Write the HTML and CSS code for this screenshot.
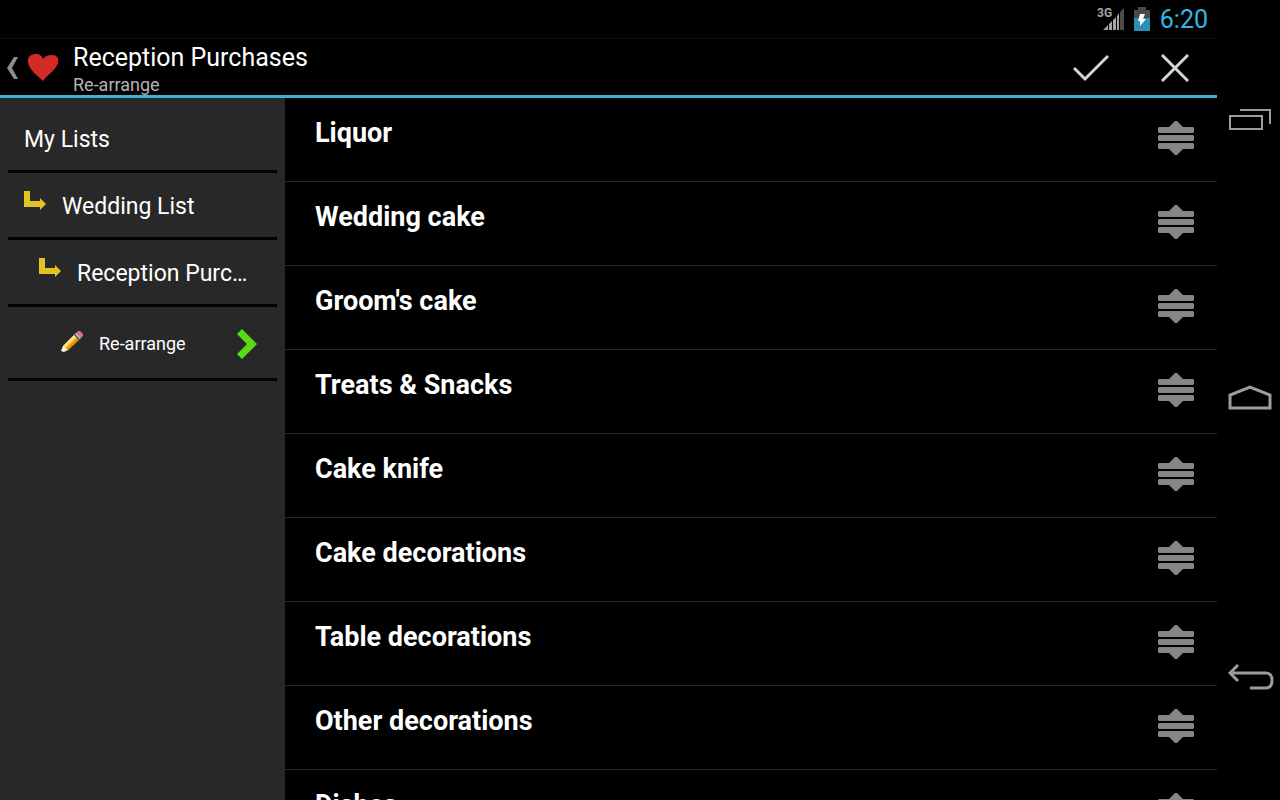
FILE: index.html
```html
<!DOCTYPE html>
<html lang="en">

<head>
    <meta charset="UTF-8">
    <meta name="viewport" content="width=device-width, initial-scale=1.0">
    <title>Reception Purchases - Re-arrange</title>
    <link rel="stylesheet" href="styles.css">
</head>

<body>
    <!-- shared icons -->
    <svg class="sprite" aria-hidden="true">
        <symbol id="handle" viewBox="0 0 36 34">
            <path d="M17 0H19L25 6H35L36 7V11L35 12H1L0 11V7L1 6H11ZM1 14H35L36 15V19L35 20H1L0 19V15ZM1 22H35L36 23V27L35 28H25L19 34H17L11 28H1L0 27V23Z" />
        </symbol>
        <symbol id="sub-arrow" viewBox="0 0 22 19">
            <path d="M0 0H6V10H16V7L22 13L16 19V16H0Z" />
        </symbol>
    </svg>

    <div class="app">
        <header class="status-bar">
            <svg class="signal" width="28" height="26" viewBox="0 0 28 26" aria-hidden="true">
                <text x="0" y="11">3G</text>
                <path fill="#a4a4a4" d="M6 24L11 19V24ZM12 24V18L15 15V24ZM16 24V14L19 11V24ZM20 24V10L22 7V24Z" />
                <path fill="#4c4c4c" d="M23 24V6L27 2V24Z" />
            </svg>
            <svg class="battery" width="16" height="24" viewBox="0 0 16 24" aria-hidden="true">
                <path fill="#4a4a4a" d="M4 0H12V3H16V12H0V3H4Z" />
                <path fill="#2b90b8" d="M0 11H16V24H0Z" />
                <path fill="#fff" d="M6 7H11L9 12H12L6 19V14H4Z" />
            </svg>
            <time>6:20</time>
        </header>

        <header class="action-bar">
            <button class="up" aria-label="Back">
                <svg width="12" height="22" viewBox="0 0 12 22">
                    <path fill="#8c8c8c" d="M8 0H12L6 11L12 22H8L1 11Z" />
                </svg>
                <svg class="heart" width="32" height="28" viewBox="0 0 32 28">
                    <path fill="#d42a27" d="M16 27C11 22 2 16 1 8C0 2 5 0 9 0C13 0 15 2 16 5C18 2 21 1 25 1C30 1 32 4 31 9C29 16 20 21 16 27Z" />
                </svg>
            </button>
            <div class="titles">
                <h1>Reception Purchases</h1>
                <p>Re-arrange</p>
            </div>
            <button class="action" aria-label="Done">
                <svg width="36" height="28" viewBox="0 0 36 28">
                    <path d="M1 14L12 25L35 2" />
                </svg>
            </button>
            <button class="action" aria-label="Cancel">
                <svg width="28" height="28" viewBox="0 0 28 28">
                    <path d="M1 1L27 27M27 1L1 27" />
                </svg>
            </button>
        </header>

        <div class="content">
            <nav class="sidebar">
                <a href="#">My Lists</a>
                <a href="#"><svg class="sub-arrow"><use href="#sub-arrow" /></svg><span>Wedding List</span></a>
                <a href="#" class="level-2"><svg class="sub-arrow"><use href="#sub-arrow" /></svg><span>Reception Purchases</span></a>
                <a href="#" class="level-3">
                    <svg class="pencil" width="22" height="22" viewBox="0 0 22 22">
                        <path fill="#f3d9a8" d="M1 21L3 15L7 19Z" />
                        <path fill="#fbb829" d="M2 16L14 4L19 9L7 20L1 21Z" />
                        <path fill="#ffe27a" d="M2 16L14 4L16 6L4 18Z" />
                        <path fill="#e88a12" d="M17 7L19 9L7 20L5 19Z" />
                        <path fill="#fff3d6" d="M2 16L7 20L3 22L0 21Z" />
                        <path fill="#4a4a52" d="M13 5L15 3L20 8L18 10Z" />
                        <path fill="#d8d8dc" d="M14 4L15 3L20 8L19 9Z" />
                        <path fill="#d9727c" d="M15 3L17 1H19L22 4V6L20 8Z" />
                    </svg>
                    <span>Re-arrange</span>
                    <svg class="current" width="20" height="30" viewBox="0 0 20 30">
                        <path fill="#5bd916" d="M0 5L5 0L20 15L5 30L0 25L10 15Z" />
                    </svg>
                </a>
            </nav>

            <ul class="items">
                <li><span>Liquor</span><button aria-label="Move Liquor"><svg><use href="#handle" /></svg></button></li>
                <li><span>Wedding cake</span><button aria-label="Move Wedding cake"><svg><use href="#handle" /></svg></button></li>
                <li><span>Groom's cake</span><button aria-label="Move Groom's cake"><svg><use href="#handle" /></svg></button></li>
                <li><span>Treats &amp; Snacks</span><button aria-label="Move Treats &amp; Snacks"><svg><use href="#handle" /></svg></button></li>
                <li><span>Cake knife</span><button aria-label="Move Cake knife"><svg><use href="#handle" /></svg></button></li>
                <li><span>Cake decorations</span><button aria-label="Move Cake decorations"><svg><use href="#handle" /></svg></button></li>
                <li><span>Table decorations</span><button aria-label="Move Table decorations"><svg><use href="#handle" /></svg></button></li>
                <li><span>Other decorations</span><button aria-label="Move Other decorations"><svg><use href="#handle" /></svg></button></li>
                <li><span>Dishes</span><button aria-label="Move Dishes"><svg><use href="#handle" /></svg></button></li>
            </ul>
        </div>
    </div>

    <nav class="system-nav">
        <button class="recents" aria-label="Recent apps">
            <svg width="46" height="26" viewBox="0 0 46 26">
                <path d="M2 10H34V23H2ZM12 4H42V18" />
            </svg>
        </button>
        <button aria-label="Home">
            <svg width="46" height="26" viewBox="0 0 46 26">
                <path d="M2 23V10L22 2L42 10V23Z" />
            </svg>
        </button>
        <button aria-label="System back">
            <svg width="46" height="26" viewBox="0 0 46 26">
                <path d="M10 1L2 9L10 17M2 9H38C42 9 44 12 44 16C44 21 42 24 38 24H22" />
            </svg>
        </button>
    </nav>
</body>

</html>
```
FILE: styles.css
```css
* {
    box-sizing: border-box;
}

body {
    display: flex;
    height: 100vh;
    margin: 0;
    overflow: hidden;
    background: #000;
    color: #fff;
    font-family: Roboto, "Noto Sans", sans-serif;
}

h1,
p,
ul {
    margin: 0;
    padding: 0;
}

button {
    display: flex;
    align-items: center;
    justify-content: center;
    padding: 0;
    border: none;
    background: none;
    cursor: pointer;
}

.sprite {
    position: absolute;
    width: 0;
    height: 0;
}

.app {
    display: flex;
    flex-direction: column;
    flex: 1;
    min-width: 0;
}

/* status bar */
.status-bar {
    display: flex;
    align-items: center;
    justify-content: flex-end;
    height: 39px;
    padding-right: 9px;
    border-bottom: 1px solid #0d0d0d;
}

.signal {
    margin-right: 9px;
}

.signal text {
    fill: #a4a4a4;
    font-size: 12px;
    font-weight: bold;
}

.battery {
    margin-right: 10px;
}

.status-bar time {
    color: #33b5e5;
    font-size: 25px;
}

/* action bar */
.action-bar {
    display: flex;
    align-items: center;
    height: 59px;
    border-bottom: 3px solid #3fb0d4;
}

.up {
    gap: 9px;
    padding: 2px 14px 0 6px;
}

.titles {
    flex: 1;
    padding-top: 3px;
}

.titles h1 {
    font-size: 25px;
    font-weight: normal;
    line-height: 32px;
}

.titles p {
    color: #b4b4b4;
    font-size: 18px;
    line-height: 22px;
}

.action {
    width: 84px;
    height: 56px;
    padding-top: 2px;
}

.action path {
    fill: none;
    stroke: #d6d6d6;
    stroke-width: 3;
}

/* lists */
.content {
    display: flex;
    flex: 1;
    min-height: 0;
}

.sidebar {
    width: 285px;
    padding: 8px;
    background: #282828;
}

.sidebar a {
    display: flex;
    align-items: center;
    height: 67px;
    padding: 2px 16px 0;
    border-bottom: 3px solid #000;
    color: #fff;
    font-size: 23px;
    text-decoration: none;
}

.sidebar span {
    overflow: hidden;
    text-overflow: ellipsis;
    white-space: nowrap;
}

.sub-arrow {
    flex: none;
    width: 22px;
    height: 19px;
    margin: 0 16px 12px 0;
    fill: #e3c322;
}

.sidebar .level-2 {
    padding-left: 31px;
    padding-right: 20px;
}

.sidebar .level-3 {
    height: 74px;
    padding-left: 53px;
    padding-right: 20px;
    font-size: 18px;
}

.pencil {
    margin: 0 16px 6px 0;
}

.current {
    margin-left: auto;
}

.items {
    flex: 1;
    list-style: none;
}

.items li {
    display: flex;
    align-items: flex-start;
    justify-content: space-between;
    height: 84px;
    padding: 19px 23px 0 30px;
    border-bottom: 1px solid #262626;
    font-size: 27px;
    font-weight: bold;
    line-height: 32px;
}

.items button {
    padding-top: 4px;
}

.items svg {
    width: 36px;
    height: 34px;
    fill: #868686;
}

/* system buttons */
.system-nav {
    display: flex;
    flex-direction: column;
    justify-content: space-between;
    width: 63px;
    padding: 79px 0 83px;
}

.system-nav button {
    height: 80px;
    padding-left: 4px;
}

.system-nav path {
    fill: none;
    stroke: #9c9c9c;
    stroke-width: 3;
}

.system-nav .recents path {
    stroke-width: 2;
}
```
